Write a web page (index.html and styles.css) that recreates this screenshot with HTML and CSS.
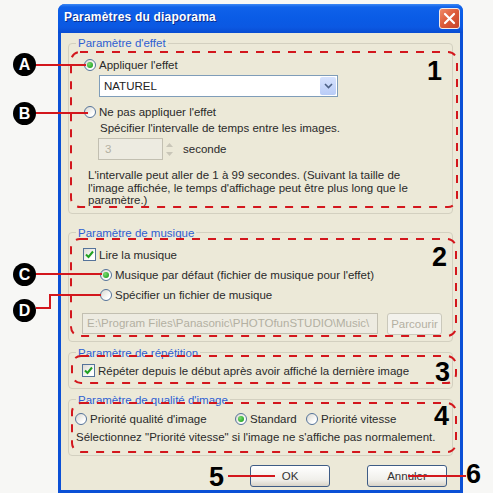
FILE: index.html
```html
<!DOCTYPE html>
<html lang="fr">
<head>
<meta charset="utf-8">
<title>Paramètres du diaporama</title>
<link rel="stylesheet" href="styles.css">
</head>
<body>
<div class="window">
  <div class="titlebar">
    <span class="title">Paramètres du diaporama</span>
    <span class="close"><svg width="13" height="13" viewBox="0 0 13 13"><path d="M2 2L11 11M11 2L2 11" stroke="#fff" stroke-width="2.2" stroke-linecap="round"/></svg></span>
  </div>
  <div class="client">
    <fieldset class="group g1">
      <legend>Paramètre d'effet</legend>
      <div class="opt o-apply"><span class="radio on"></span><span>Appliquer l'effet</span></div>
      <div class="combo"><span class="combo-text">NATUREL</span><span class="combo-btn"><svg width="9" height="6" viewBox="0 0 9 6"><path d="M1 1L4.5 4.5L8 1" fill="none" stroke="#4D6185" stroke-width="1.6"/></svg></span></div>
      <div class="opt o-none"><span class="radio"></span><span>Ne pas appliquer l'effet</span></div>
      <div class="hint">Spécifier l'intervalle de temps entre les images.</div>
      <div class="spin-row">
        <div class="spin">3</div>
        <div class="updown"><svg width="7" height="4" viewBox="0 0 7 4"><path d="M0 4L3.5 0L7 4Z" fill="#C9C6B8"/></svg><svg width="7" height="4" viewBox="0 0 7 4"><path d="M0 0L3.5 4L7 0Z" fill="#C9C6B8"/></svg></div>
        <span class="unit">seconde</span>
      </div>
      <p class="note">L'intervalle peut aller de 1 à 99 secondes. (Suivant la taille de<br>l'image affichée, le temps d'affichage peut être plus long que le<br>paramètre.)</p>
    </fieldset>

    <fieldset class="group g2">
      <legend>Paramètre de musique</legend>
      <div class="opt o-read"><span class="check"><svg width="11" height="11" viewBox="0 0 11 11"><path d="M2 5.5L4.5 8L9 2.5" fill="none" stroke="#21A121" stroke-width="2"/></svg></span><span>Lire la musique</span></div>
      <div class="opt o-default"><span class="radio on"></span><span>Musique par défaut (fichier de musique pour l'effet)</span></div>
      <div class="opt o-file"><span class="radio"></span><span>Spécifier un fichier de musique</span></div>
      <div class="path-row">
        <div class="path">E:\Program Files\Panasonic\PHOTOfunSTUDIO\Music\</div>
        <div class="browse">Parcourir</div>
      </div>
    </fieldset>

    <fieldset class="group g3">
      <legend>Paramètre de répétition</legend>
      <div class="opt o-repeat"><span class="check"><svg width="11" height="11" viewBox="0 0 11 11"><path d="M2 5.5L4.5 8L9 2.5" fill="none" stroke="#21A121" stroke-width="2"/></svg></span><span>Répéter depuis le début après avoir affiché la dernière image</span></div>
    </fieldset>

    <fieldset class="group g4">
      <legend>Paramètre de qualité d'image</legend>
      <div class="quality">
        <div class="opt q-image"><span class="radio"></span><span>Priorité qualité d'image</span></div>
        <div class="opt q-std"><span class="radio on"></span><span>Standard</span></div>
        <div class="opt q-speed"><span class="radio"></span><span>Priorité vitesse</span></div>
      </div>
      <div class="hint2">Sélectionnez "Priorité vitesse" si l'image ne s'affiche pas normalement.</div>
    </fieldset>

    <div class="buttons">
      <div class="btn">OK</div>
      <div class="btn">Annuler</div>
    </div>
  </div>
</div>

<svg class="overlay" width="493" height="493" viewBox="0 0 493 493">
  <g fill="none" stroke="#D3171D" stroke-width="2" stroke-dasharray="8 8">
    <rect x="71" y="52" width="386" height="155" rx="9"/>
    <rect x="71" y="239" width="385" height="97" rx="9"/>
    <rect x="72" y="356" width="384" height="27" rx="9"/>
    <rect x="72" y="403" width="384" height="49" rx="9"/>
  </g>
  <g fill="none" stroke="#D3171D" stroke-width="2">
    <path d="M35 65H86"/>
    <path d="M35 113H88"/>
    <path d="M35 274H102"/>
    <path d="M36 308H50V295H101"/>
    <path d="M228 476H275"/>
    <path d="M408 476H466"/>
  </g>
</svg>

<div class="mark mark-a">A</div>
<div class="mark mark-b">B</div>
<div class="mark mark-c">C</div>
<div class="mark mark-d">D</div>
<div class="num num-1">1</div>
<div class="num num-2">2</div>
<div class="num num-3">3</div>
<div class="num num-4">4</div>
<div class="num num-5">5</div>
<div class="num num-6">6</div>
</body>
</html>
```
FILE: styles.css
```css
html, body {
  margin: 0;
  padding: 0;
}
body {
  width: 493px;
  height: 493px;
  overflow: hidden;
  position: relative;
  background: #F7F7F5;
  font-family: "Liberation Sans", Arial, sans-serif;
  font-size: 11.5px;
  color: #2A2A2A;
}

.window {
  margin: 4px 0 0 58px;
  width: 405px;
  height: 489px;
  box-sizing: border-box;
  padding: 0 3px 3px;
  background: #0B50D6;
  border-radius: 7px 7px 0 0;
  display: flex;
  flex-direction: column;
}

.titlebar {
  height: 29px;
  margin: 0 -3px;
  padding: 0 3px 0 6px;
  display: flex;
  align-items: center;
  justify-content: space-between;
  border-radius: 7px 7px 0 0;
  background: linear-gradient(to bottom, #3C88F4 0, #0F62EA 3px, #0A5CE6 45%, #0B58E2 80%, #084CD2 100%);
}
.title {
  color: #fff;
  font-weight: bold;
  font-size: 12px;
  letter-spacing: 0.2px;
  text-shadow: 1px 1px 0 #0C2C8A;
  margin-top: -3px;
}
.close {
  width: 19px;
  height: 19px;
  margin-top: -1px;
  border: 1px solid #F4E9E6;
  border-radius: 3px;
  background: linear-gradient(135deg, #F08A68, #DC5A38 50%, #C6432A);
  display: flex;
  align-items: center;
  justify-content: center;
}

.client {
  flex: 1;
  background: #ECE9D8;
  display: flex;
  flex-direction: column;
}

.group {
  margin: 0 7px;
  padding: 0;
  border: 1px solid #D3D0C0;
  border-radius: 4px;
  min-inline-size: 0;
}
.group legend {
  margin-left: 7px;
  padding: 0 2px;
  font-size: 11.5px;
  line-height: 12px;
  color: #2F5FD2;
}
.g1 { margin-top: 4px; padding-bottom: 6px; }
.g2 { margin-top: 13px; padding-bottom: 6px; }
.g3 { margin-top: 5px; padding-bottom: 10px; }
.g4 { margin-top: 5px; padding-bottom: 12px; }

.opt {
  display: flex;
  align-items: center;
  gap: 3px;
  height: 14px;
  white-space: nowrap;
}

.radio {
  flex: none;
  width: 12px;
  height: 12px;
  box-sizing: border-box;
  border-radius: 50%;
  border: 1px solid #55739A;
  background: linear-gradient(135deg, #D9D8D0, #FFFFFF 75%);
  position: relative;
}
.radio.on::after {
  content: "";
  position: absolute;
  left: 2px;
  top: 2px;
  width: 6px;
  height: 6px;
  border-radius: 50%;
  background: radial-gradient(circle at 35% 35%, #7BDB72, #22A324 80%);
}
.check {
  flex: none;
  width: 13px;
  height: 13px;
  box-sizing: border-box;
  border: 1px solid #55739A;
  background: linear-gradient(135deg, #DCDBD3, #FFFFFF 75%);
  display: flex;
  align-items: center;
  justify-content: center;
}

/* group 1 */
.o-apply { margin-top: 9px; margin-left: 15px; }
.combo {
  margin: 3px 0 0 30px;
  width: 239px;
  height: 22px;
  box-sizing: border-box;
  border: 1px solid #7F9DB9;
  background: #fff;
  display: flex;
  align-items: center;
  justify-content: space-between;
  padding: 1px;
}
.combo-text {
  padding-left: 3px;
  color: #222;
}
.combo-btn {
  width: 16px;
  height: 18px;
  border-radius: 2px;
  background: linear-gradient(to bottom, #D6E2FD, #B9CCF7);
  display: flex;
  align-items: center;
  justify-content: center;
}
.o-none { margin-top: 8px; margin-left: 15px; }
.hint {
  margin: 3px 0 0 31px;
  height: 12px;
  line-height: 12px;
  white-space: nowrap;
}
.spin-row {
  margin: 4px 0 0 29px;
  height: 22px;
  display: flex;
  align-items: center;
}
.spin {
  width: 65px;
  height: 22px;
  box-sizing: border-box;
  border: 1px solid #C2BFB1;
  background: #EDEBE1;
  color: #B3B0A2;
  line-height: 20px;
  padding-left: 6px;
}
.updown {
  width: 12px;
  height: 22px;
  display: flex;
  flex-direction: column;
  align-items: center;
  justify-content: center;
  gap: 5px;
}
.unit { margin-left: 8px; }
.note {
  margin: 9px 0 0 19px;
  line-height: 12.5px;
  white-space: nowrap;
}

/* group 2 */
.o-read { margin-top: 9px; margin-left: 14px; }
.o-default { margin-top: 6px; margin-left: 31px; }
.o-file { margin-top: 6px; margin-left: 31px; }
.path-row {
  margin: 11px 0 0 13px;
  display: flex;
  align-items: center;
  gap: 9px;
}
.path {
  width: 296px;
  height: 21px;
  box-sizing: border-box;
  border: 1px solid #C2BFB1;
  background: #EDEBE1;
  color: #B3B0A2;
  line-height: 19px;
  padding-left: 4px;
  overflow: hidden;
  white-space: nowrap;
}
.browse {
  width: 55px;
  height: 22px;
  box-sizing: border-box;
  border: 1px solid #CAC8BB;
  border-radius: 3px;
  background: #F3F2EC;
  color: #B3B0A2;
  line-height: 20px;
  text-align: center;
}

/* group 3 */
.o-repeat { margin-top: 5px; margin-left: 13px; }

/* group 4 */
.quality {
  margin: 6px 0 0 6px;
  display: flex;
}
.q-image { width: 160px; }
.q-std { width: 71px; }
.hint2 {
  margin: 5px 0 0 7px;
  height: 12px;
  line-height: 12px;
  white-space: nowrap;
}

.buttons {
  margin-top: 9px;
  padding-right: 13px;
  display: flex;
  justify-content: flex-end;
  gap: 37px;
}
.btn {
  width: 80px;
  height: 22px;
  box-sizing: border-box;
  border: 1px solid #3E5C86;
  border-radius: 3px;
  background: linear-gradient(to bottom, #FFFFFF, #F0EFEA 70%, #D8D3C8);
  text-align: center;
  line-height: 20px;
  color: #333;
}

/* annotations */
.overlay {
  position: absolute;
  left: 0;
  top: 0;
  pointer-events: none;
}
.mark {
  position: absolute;
  width: 23px;
  height: 23px;
  border-radius: 50%;
  background: #000;
  color: #fff;
  font-weight: bold;
  font-size: 16px;
  line-height: 23px;
  text-align: center;
}
.mark-a { left: 13px; top: 53px; }
.mark-b { left: 13px; top: 102px; }
.mark-c { left: 13px; top: 263px; }
.mark-d { left: 13px; top: 299px; }

.num {
  position: absolute;
  font-weight: bold;
  font-size: 27px;
  line-height: 27px;
  color: #000;
}
.num-1 { left: 427px; top: 58px; }
.num-2 { left: 432px; top: 244px; }
.num-3 { left: 435px; top: 359px; }
.num-4 { left: 434px; top: 403px; }
.num-5 { left: 209px; top: 464px; }
.num-6 { left: 466px; top: 461px; }
```
